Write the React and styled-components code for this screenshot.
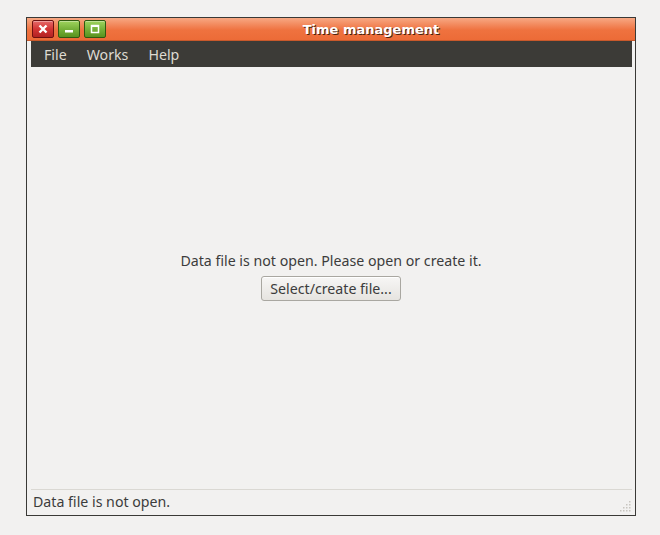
import styled, { createGlobalStyle } from 'styled-components';

const Global = createGlobalStyle`
  html, body {
    margin: 0;
    background: #f2f1f0;
  }
  body {
    font-family: 'Noto Sans', 'DejaVu Sans', sans-serif;
  }
`;

const Desktop = styled.div`
  padding: 17px 0 0 26px;
  height: 535px;
  box-sizing: border-box;
`;

const Window = styled.div`
  width: 610px;
  height: 499px;
  box-sizing: border-box;
  border: 1px solid #3a3936;
  background: #f2f1f0;
  display: flex;
  flex-direction: column;
`;

const TitleBar = styled.div`
  position: relative;
  height: 23px;
  flex: none;
  display: flex;
  align-items: center;
  padding-left: 5px;
  gap: 4px;
  background: linear-gradient(#f7a883 0%, #f28558 35%, #ef723f 55%, #ec6b37 100%);
  border-bottom: 1px solid #c9592b;
  box-sizing: border-box;
`;

const WinButton = styled.div`
  width: 22px;
  height: 18px;
  box-sizing: border-box;
  border-radius: 2px;
  border: 1px solid ${(p) => (p.red ? '#6e1010' : '#2f5a10')};
  background: ${(p) =>
    p.red
      ? 'linear-gradient(#e66a6a, #d33434 50%, #b22222)'
      : 'linear-gradient(#9fd45e, #77b23a 50%, #5a921f)'};
  box-shadow: inset 0 1px 0 rgba(255, 255, 255, 0.35);
  display: flex;
  align-items: center;
  justify-content: center;
`;

const Title = styled.div`
  position: absolute;
  left: 0;
  right: 0;
  top: 1px;
  bottom: 0;
  display: flex;
  align-items: center;
  justify-content: center;
  padding-left: 80px;
  color: #ffffff;
  font-family: 'DejaVu Sans', sans-serif;
  font-weight: bold;
  font-size: 13px;
  text-shadow: 1px 1px 0 #4a2210;
  pointer-events: none;
`;

const MenuBar = styled.div`
  height: 26px;
  flex: none;
  margin: 0 3px 0 4px;
  background: #3c3b37;
  display: flex;
  align-items: center;
  padding-left: 3px;
`;

const MenuItem = styled.div`
  color: #dfdbd2;
  font-size: 14.2px;
  padding: 0 10px;
`;

const Content = styled.div`
  flex: 1;
  display: flex;
  flex-direction: column;
  align-items: center;
  justify-content: center;
  gap: 6px;
  color: #3c3c3c;
  font-size: 14.2px;
  padding-bottom: 4px;
`;

const Button = styled.button`
  font-family: inherit;
  font-size: 14.2px;
  color: #3c3c3c;
  height: 25px;
  padding: 0 8px;
  border: 1px solid #a9a7a1;
  border-radius: 3px;
  background: linear-gradient(#f7f6f5, #e6e4e0);
  box-shadow: inset 0 1px 0 #ffffff;
`;

const StatusBar = styled.div`
  height: 26px;
  flex: none;
  margin: 0 3px 0 4px;
  border-top: 1px solid #dad8d3;
  display: flex;
  align-items: center;
  justify-content: space-between;
  padding: 0 0 3px 2px;
  color: #3c3c3c;
  font-size: 14.2px;
  box-sizing: border-box;
`;

const Grip = styled.svg`
  margin-right: 1px;
  margin-top: 11px;
`;

const gripDots = [
  [9, 0],
  [9, 3], [6, 3],
  [9, 6], [6, 6], [3, 6],
  [9, 9], [6, 9], [3, 9], [0, 9],
];

export default function App() {
  return (
    <>
      <Global />
      <Desktop>
        <Window>
          <TitleBar>
            <WinButton red>
              <svg width="10" height="10" viewBox="0 0 10 10">
                <path d="M1.5 1.5 L8.5 8.5 M8.5 1.5 L1.5 8.5" stroke="#fff" strokeWidth="2.4" />
              </svg>
            </WinButton>
            <WinButton>
              <svg width="10" height="10" viewBox="0 0 10 10">
                <rect x="1" y="6" width="8" height="2.5" fill="#fff" />
              </svg>
            </WinButton>
            <WinButton>
              <svg width="10" height="10" viewBox="0 0 10 10">
                <rect x="1.5" y="1.5" width="7" height="7" fill="none" stroke="#fff" strokeWidth="1.5" />
                <rect x="1" y="1" width="8" height="2" fill="#fff" />
              </svg>
            </WinButton>
            <Title>Time management</Title>
          </TitleBar>
          <MenuBar>
            <MenuItem>File</MenuItem>
            <MenuItem>Works</MenuItem>
            <MenuItem>Help</MenuItem>
          </MenuBar>
          <Content>
            <div>Data file is not open. Please open or create it.</div>
            <Button>Select/create file...</Button>
          </Content>
          <StatusBar>
            <span>Data file is not open.</span>
            <Grip width="11" height="11" viewBox="0 0 11 11">
              {gripDots.map(([x, y]) => (
                <rect key={`${x}-${y}`} x={x} y={y} width="1.5" height="1.5" fill="#c8c5bf" />
              ))}
            </Grip>
          </StatusBar>
        </Window>
      </Desktop>
    </>
  );
}
